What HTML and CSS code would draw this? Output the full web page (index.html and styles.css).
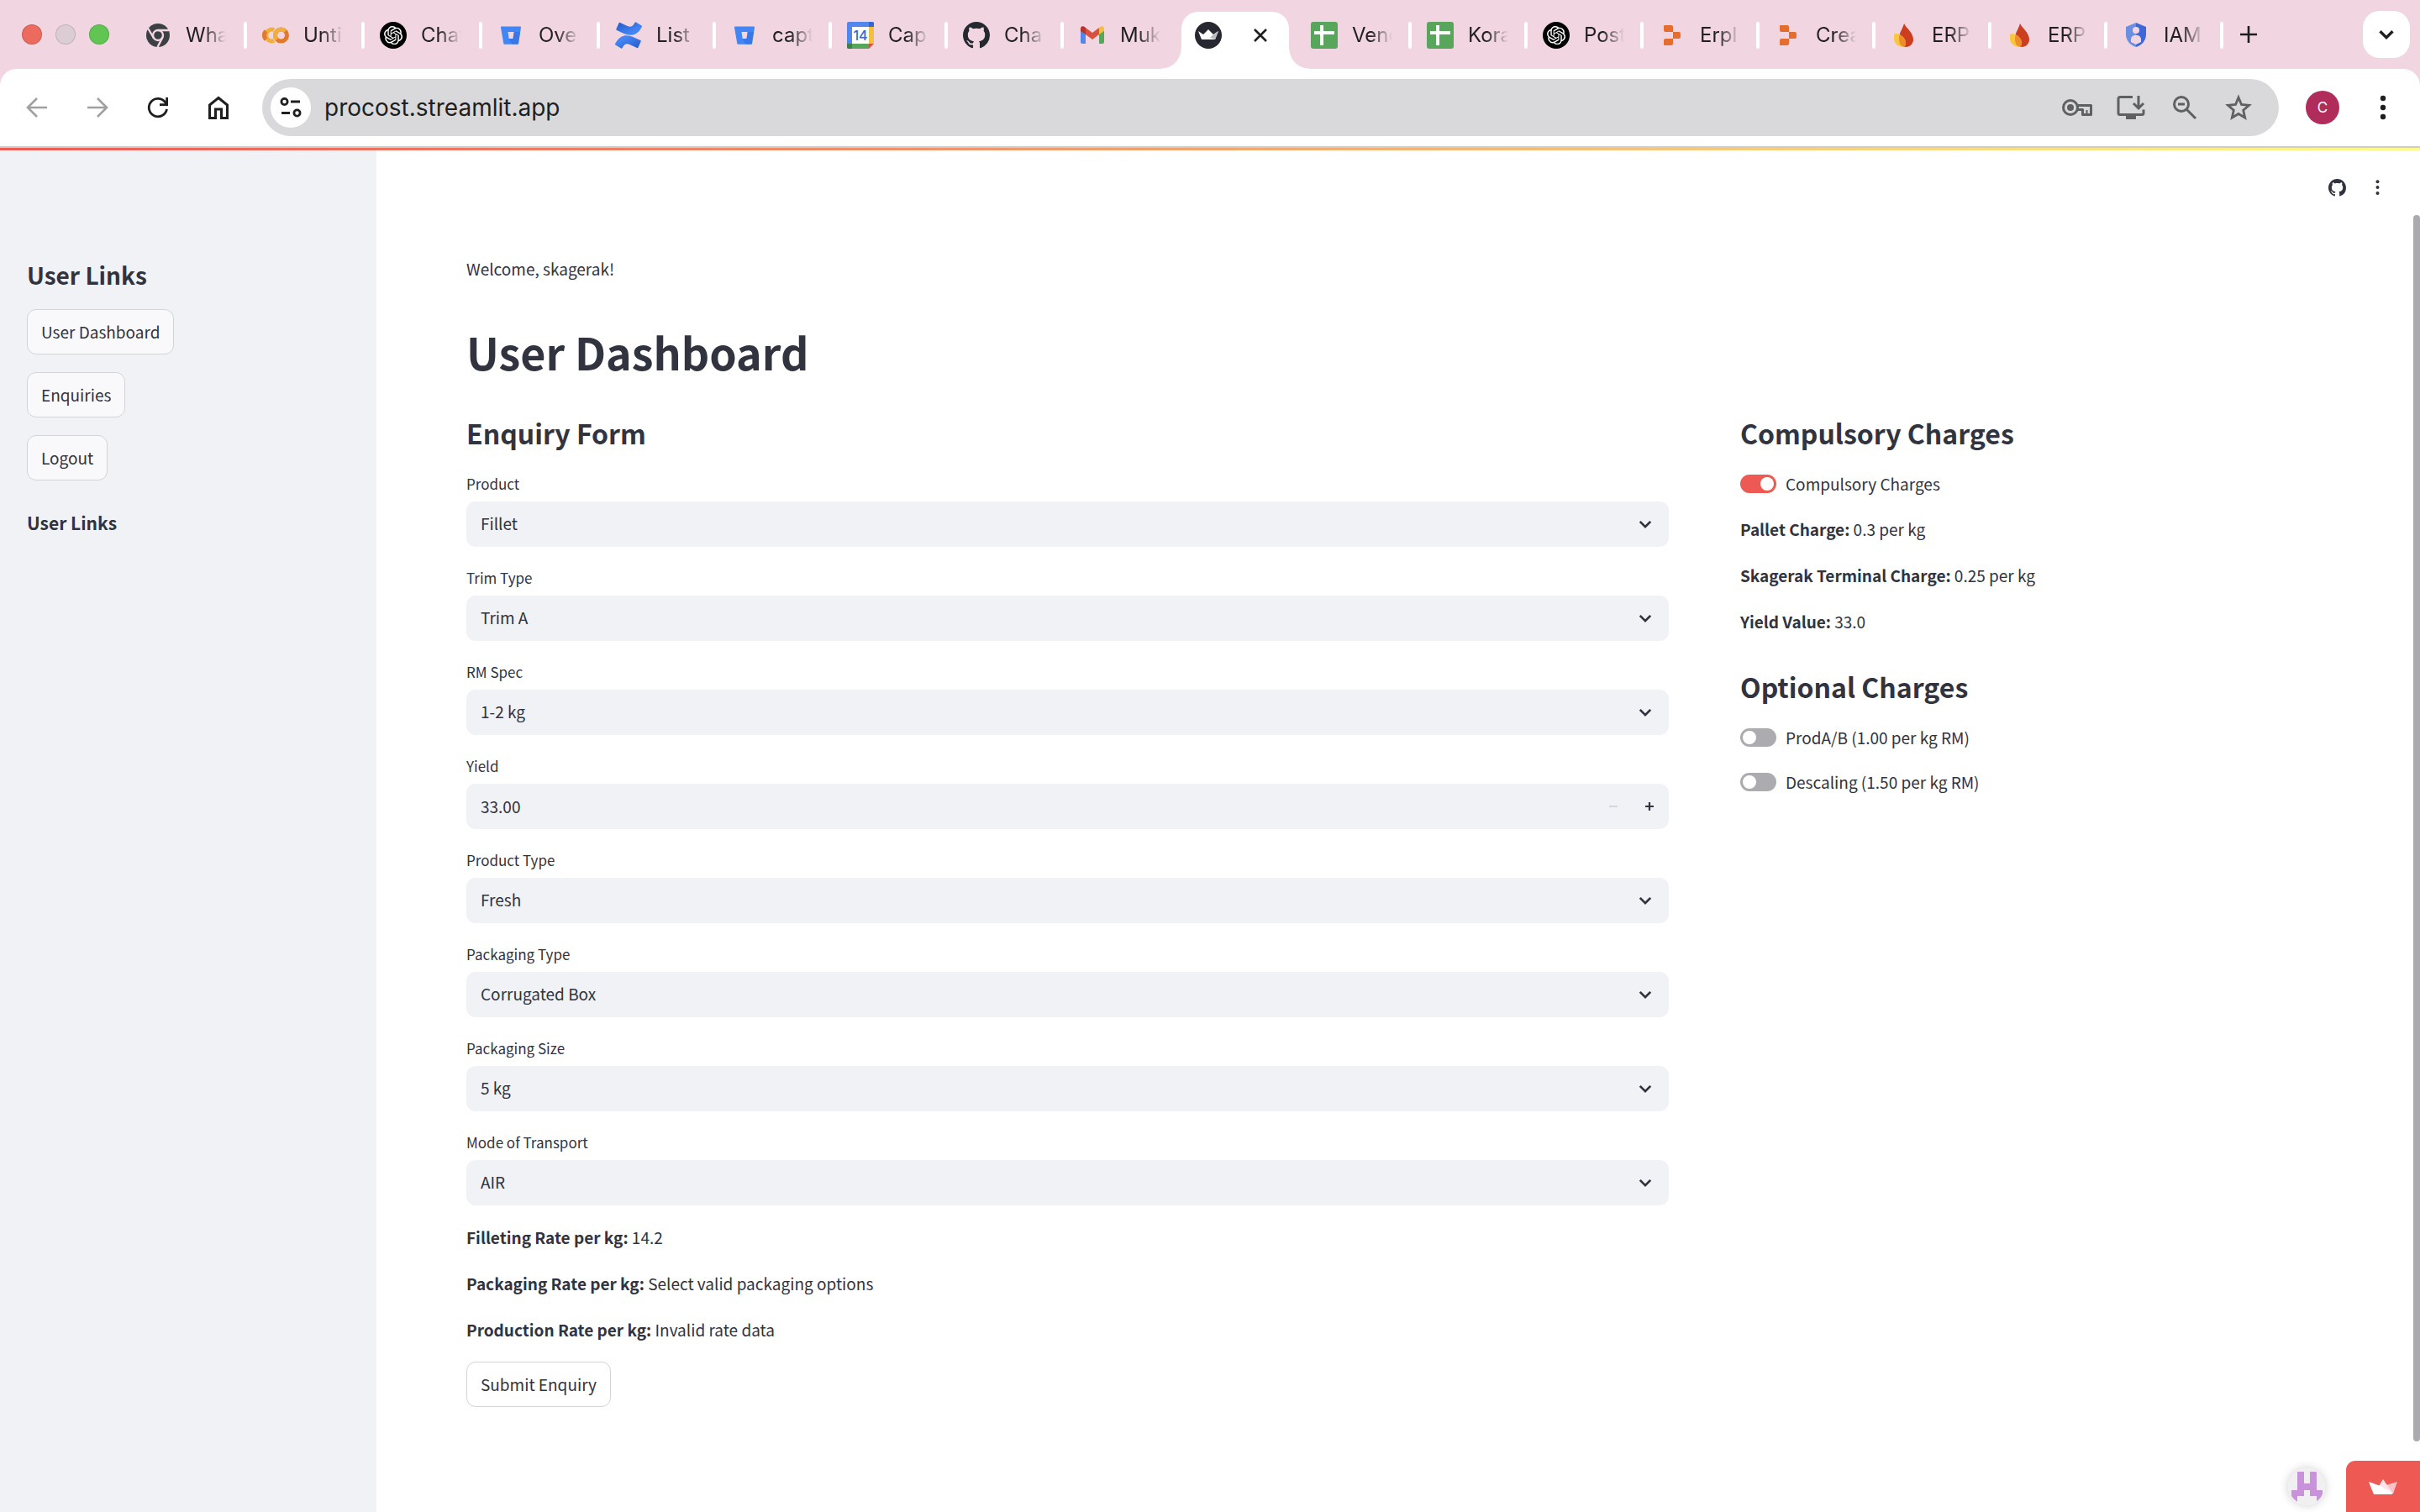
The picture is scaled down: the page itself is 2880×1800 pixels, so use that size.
FILE: index.html
```html
<!DOCTYPE html>
<html lang="en">
<head>
<meta charset="utf-8">
<title>procost</title>
<link rel="stylesheet" href="styles.css">
</head>
<body>
<svg class="defs" aria-hidden="true">
  <symbol id="chatgpt" viewBox="0 0 32 32">
    <circle cx="16" cy="16" r="16" fill="#000"/>
    <path transform="translate(5 5) scale(.92)" fill="#fff" d="M22.28 9.82a5.98 5.98 0 0 0-.51-4.91 6.05 6.05 0 0 0-6.51-2.9A6.07 6.07 0 0 0 4.98 4.18a5.98 5.98 0 0 0-4 2.9 6.05 6.05 0 0 0 .74 7.1 5.98 5.98 0 0 0 .51 4.91 6.05 6.05 0 0 0 6.51 2.9A5.98 5.98 0 0 0 13.26 24a6.06 6.06 0 0 0 5.77-4.21 5.99 5.99 0 0 0 4-2.9 6.06 6.06 0 0 0-.75-7.07zm-9.02 12.61a4.48 4.48 0 0 1-2.88-1.04l.14-.08 4.78-2.76a.8.8 0 0 0 .39-.68v-6.74l2.02 1.17a.07.07 0 0 1 .04.05v5.58a4.5 4.5 0 0 1-4.49 4.5zM3.6 18.3a4.47 4.47 0 0 1-.53-3.01l.14.08 4.78 2.76a.77.77 0 0 0 .78 0l5.84-3.37v2.33a.08.08 0 0 1-.03.06L9.74 19.95A4.5 4.5 0 0 1 3.6 18.3zM2.34 7.9a4.49 4.49 0 0 1 2.37-1.97v5.68a.77.77 0 0 0 .39.68l5.81 3.35-2.02 1.17a.08.08 0 0 1-.07 0l-4.83-2.79A4.5 4.5 0 0 1 2.34 7.87zm16.6 3.86L13.1 8.36l2.02-1.16a.08.08 0 0 1 .07 0l4.83 2.79a4.49 4.49 0 0 1-.68 8.1v-5.68a.79.79 0 0 0-.4-.65zm2.01-3.02-.14-.09-4.77-2.78a.78.78 0 0 0-.79 0L9.41 9.23V6.9a.07.07 0 0 1 .03-.06l4.83-2.79a4.5 4.5 0 0 1 6.68 4.66zM8.31 12.86l-2.02-1.16a.08.08 0 0 1-.04-.06V6.07a4.5 4.5 0 0 1 7.38-3.45l-.14.08-4.78 2.76a.8.8 0 0 0-.39.68zm1.1-2.36 2.6-1.5 2.61 1.5v3l-2.6 1.5-2.61-1.5z"/>
  </symbol>
  <symbol id="bitbucket" viewBox="0 0 32 32">
    <path fill="#4285f5" d="M5 5.500H27a1 1 0 0 1 1 1.200L25 25.800a1.200 1.200 0 0 1-1.200 1H8.500a1.200 1.200 0 0 1-1.200-1L4 6.700a1 1 0 0 1 1-1.200zM12.500 12l1.200 8h4.800l1.200-8z" fill-rule="evenodd"/>
    <path fill="#2b66d8" d="M19.700 12h7.300l-2 14-.8.800h-7l-3.500-6.800h4.800z" opacity=".45"/>
  </symbol>
  <symbol id="github" viewBox="0 0 16 16">
    <path d="M8 0C3.580 0 0 3.580 0 8c0 3.540 2.290 6.530 5.470 7.590.4.070.55-.17.55-.38 0-.19-.01-.82-.01-1.490-2.010.37-2.530-.49-2.690-.94-.09-.23-.48-.94-.82-1.130-.28-.15-.68-.52-.01-.53.63-.01 1.080.58 1.230.82.72 1.210 1.870.87 2.330.66.07-.52.28-.87.51-1.070-1.780-.2-3.640-.89-3.640-3.950 0-.87.31-1.590.82-2.150-.08-.2-.36-1.020.08-2.120 0 0 .67-.21 2.200.82.64-.18 1.320-.27 2-.27s1.360.09 2 .27c1.530-1.040 2.200-.82 2.200-.82.44 1.100.16 1.920.08 2.120.51.56.82 1.270.82 2.150 0 3.070-1.870 3.750-3.650 3.950.29.25.54.73.54 1.480 0 1.070-.01 1.930-.01 2.200 0 .21.15.46.55.38A8.010 8.010 0 0 0 16 8c0-4.420-3.580-8-8-8z"/>
  </symbol>
  <symbol id="sheets" viewBox="0 0 32 32">
    <rect width="32" height="32" rx="3" fill="#58a55c"/>
    <path fill="#fff" d="M11 4h4v7h13v4H15v13h-4V15H4v-4h7z"/>
  </symbol>
  <symbol id="puzzle" viewBox="0 0 32 32">
    <path fill="#e56e2e" d="M7 4h8a2 2 0 0 1 2 2v6H8a2 2 0 0 1-2-2V5a1 1 0 0 1 1-1zM17 12h7a2 2 0 0 1 2 2v4a2 2 0 0 1-2 2h-7zM8 20h9v6a2 2 0 0 1-2 2H7a1 1 0 0 1-1-1v-5a2 2 0 0 1 2-2z"/>
  </symbol>
  <symbol id="flame" viewBox="0 0 32 32">
    <path fill="#cb3f20" d="M16 2c3 6 11 11 11 19 0 5-4 9-9 9-4 0-8-5-8-10 0-7 4-11 6-18z"/>
    <path fill="#f8c73e" d="M5 14c7-1 12 5 11 16C9 30 4 26 4 20c0-3 0-5 1-6z"/>
    <path fill="#ee8d2b" d="M11 15c6 3 9 9 6 14.800C12 30 10 26 10 20c0-2 0-3 1-5z"/>
  </symbol>
  <symbol id="chevron" viewBox="0 0 16 16"><path d="M3 5.500l5 5 5-5" fill="none" stroke="currentColor" stroke-width="2.200"/></symbol>
  <symbol id="dots" viewBox="0 0 8 32"><circle cx="4" cy="5" r="3.200"/><circle cx="4" cy="16" r="3.200"/><circle cx="4" cy="27" r="3.200"/></symbol>
</svg>

<header class="browser">
  <div class="tabstrip">
    <div class="lights"><i class="light red"></i><i class="light idle"></i><i class="light green"></i></div>
    <nav class="tabs" aria-label="Tabs">
      <a class="tab" href="#"><svg class="favicon" viewBox="0 0 32 32"><circle cx="16" cy="16" r="14" fill="#3c4043"/><circle cx="16" cy="16" r="6" fill="none" stroke="#f1d6e2" stroke-width="2.400"/><path d="M16 10h13M10.800 19L4 7.500M21.200 19L15.500 30" stroke="#f1d6e2" stroke-width="2.400"/></svg><span class="tab-title">Wha</span></a>
      <a class="tab" href="#"><svg class="favicon" viewBox="0 0 32 32"><g fill="none" stroke-width="5"><path d="M14.200 9.500A7 7 0 1 0 14.200 22.500" stroke="#f2ae3a"/><path d="M4.500 11A7 7 0 0 0 4.500 21" stroke="#df7a2e"/><circle cx="22.500" cy="16" r="7" stroke="#df7a2e"/><path d="M17.500 21A7 7 0 0 1 27.500 11" stroke="#f2ae3a"/></g></svg><span class="tab-title">Unti</span></a>
      <a class="tab" href="#"><svg class="favicon"><use href="#chatgpt"/></svg><span class="tab-title">Chat</span></a>
      <a class="tab" href="#"><svg class="favicon"><use href="#bitbucket"/></svg><span class="tab-title">Over</span></a>
      <a class="tab" href="#"><svg class="favicon" viewBox="0 0 24 24"><defs><linearGradient id="fold-up" x1="1" y1="1" x2="0.3" y2="0.3"><stop offset="0" stop-color="#2457c5"/><stop offset="1" stop-color="#4385f5"/></linearGradient><linearGradient id="fold-down" x1="0" y1="0" x2="0.7" y2="0.7"><stop offset="0" stop-color="#2457c5"/><stop offset="1" stop-color="#4385f5"/></linearGradient></defs><path fill="url(#fold-up)" d="M.87 18.257c-.248.382-.53.875-.763 1.245a.764.764 0 0 0 .255 1.040l4.965 3.054a.764.764 0 0 0 1.058-.26c.199-.332.454-.763.733-1.221 1.967-3.247 3.945-2.853 7.508-1.146l4.957 2.337a.764.764 0 0 0 1.028-.382l2.364-5.346a.764.764 0 0 0-.382-1 599.851 599.851 0 0 1-4.965-2.361C10.911 10.970 5.224 11.185.87 18.257z"/><path fill="url(#fold-down)" d="M23.131 5.743c.249-.405.531-.875.764-1.250a.764.764 0 0 0-.256-1.034L18.675.404a.764.764 0 0 0-1.058.26c-.195.335-.451.763-.734 1.225-1.966 3.246-3.945 2.850-7.508 1.146L4.437.694a.764.764 0 0 0-1.027.382L1.046 6.422a.764.764 0 0 0 .382 1c1.039.49 3.105 1.467 4.965 2.361 6.698 3.246 12.392 3.029 16.738-4.040z"/></svg><span class="tab-title">List</span></a>
      <a class="tab" href="#"><svg class="favicon"><use href="#bitbucket"/></svg><span class="tab-title">capt</span></a>
      <a class="tab" href="#"><svg class="favicon" viewBox="0 0 32 32"><rect width="32" height="32" rx="2" fill="#5186ec"/><path fill="#3367d6" d="M26 0h4a2 2 0 0 1 2 2v4h-6z"/><path fill="#f2bf42" d="M26 6h6v20h-6z"/><path fill="#58a55c" d="M6 26h20v6H6z"/><path fill="#3f7f45" d="M0 26h6v6H2a2 2 0 0 1-2-2z"/><path fill="#f1d6e2" d="M26 26h6v6h-6z"/><path fill="#d85140" d="M26 26h6l-6 6z"/><path fill="#fff" d="M6 6h20v20H6z"/><text x="16" y="22" text-anchor="middle" class="cal-day">14</text></svg><span class="tab-title">Cap</span></a>
      <a class="tab" href="#"><svg class="favicon ink"><use href="#github"/></svg><span class="tab-title">Cha</span></a>
      <a class="tab" href="#"><svg class="favicon" viewBox="0 0 32 32"><path fill="#5186ec" d="M2 9l6 4v13H4a2 2 0 0 1-2-2z"/><path fill="#58a55c" d="M30 9l-6 4v13h4a2 2 0 0 0 2-2z"/><path fill="#d85140" d="M8 7l8 6 8-6v8l-8 6-8-6z"/><path fill="#b3352b" d="M2 8c0-3 3-4 6-1v8l-6-4z"/><path fill="#f2bf42" d="M30 8c0-3-3-4-6-1v8l6-4z"/></svg><span class="tab-title">Muk</span></a>
      <a class="tab active" href="#" aria-label="procost"><svg class="favicon" viewBox="0 0 32 32"><circle cx="16" cy="16" r="16" fill="#262730"/><path fill="#fff" d="M4 11l6 4 6-6 6 6 6-4-4 10H8z"/><path fill="#bbb" d="M22 15l6-4-4 10-6-2z"/></svg><svg class="close" viewBox="0 0 16 16"><path d="M1 1l14 14M15 1L1 15" stroke="#1f1f1f" stroke-width="2.600"/></svg></a>
      <a class="tab" href="#"><svg class="favicon"><use href="#sheets"/></svg><span class="tab-title">Vend</span></a>
      <a class="tab" href="#"><svg class="favicon"><use href="#sheets"/></svg><span class="tab-title">Kora</span></a>
      <a class="tab" href="#"><svg class="favicon"><use href="#chatgpt"/></svg><span class="tab-title">Post</span></a>
      <a class="tab" href="#"><svg class="favicon"><use href="#puzzle"/></svg><span class="tab-title">Erpl</span></a>
      <a class="tab" href="#"><svg class="favicon"><use href="#puzzle"/></svg><span class="tab-title">Crea</span></a>
      <a class="tab" href="#"><svg class="favicon"><use href="#flame"/></svg><span class="tab-title">ERP</span></a>
      <a class="tab" href="#"><svg class="favicon"><use href="#flame"/></svg><span class="tab-title">ERP</span></a>
      <a class="tab" href="#"><svg class="favicon" viewBox="0 0 32 32"><path fill="#6a8fe3" d="M16 1L4 6v9c0 7 5 13 12 15z"/><path fill="#3f67d6" d="M16 1l12 5v9c0 7-5 13-12 15z"/><circle cx="16" cy="10" r="4" fill="#f1d6e2"/><path fill="#f1d6e2" d="M10 24v-3c0-7 12-7 12 0v3l-6 3z"/></svg><span class="tab-title">IAM</span></a>
    </nav>
    <button class="icon-btn new-tab" aria-label="New tab"><svg width="20" height="20" viewBox="0 0 20 20"><path d="M10 0v20M0 10h20" stroke="currentColor" stroke-width="2.600"/></svg></button>
    <button class="icon-btn tab-search" aria-label="Search tabs"><svg width="24" height="24"><use href="#chevron"/></svg></button>
  </div>
  <div class="toolbar">
    <button class="icon-btn nav dim" aria-label="Back"><svg width="32" height="32" viewBox="0 0 32 32"><path d="M28 16H5M16 5L5 16l11 11" fill="none" stroke="currentColor" stroke-width="2.600"/></svg></button>
    <button class="icon-btn nav dim" aria-label="Forward"><svg width="32" height="32" viewBox="0 0 32 32"><path d="M4 16h23M16 5l11 11-11 11" fill="none" stroke="currentColor" stroke-width="2.600"/></svg></button>
    <button class="icon-btn nav" aria-label="Reload"><svg width="32" height="32" viewBox="0 0 32 32"><path d="M26.500 18A10.700 10.700 0 1 1 24 9l2.500 3" fill="none" stroke="currentColor" stroke-width="2.800"/><path d="M28 4v10H18v-2.800h7.200V4z" fill="currentColor"/></svg></button>
    <button class="icon-btn nav" aria-label="Home"><svg width="32" height="32" viewBox="0 0 32 32"><path d="M5.500 13L16 4.500 26.500 13v15.500h-7V18h-7v10.500h-7z" fill="none" stroke="currentColor" stroke-width="3"/></svg></button>
    <div class="omnibox">
      <button class="icon-btn site-info" aria-label="Site information"><svg width="28" height="28" viewBox="0 0 28 28"><g fill="none" stroke="currentColor" stroke-width="2.800"><circle cx="6.500" cy="7" r="3.600"/><path d="M14 7h11M3 20.500h10"/><circle cx="21.500" cy="20.500" r="3.600"/></g></svg></button>
      <input class="url" type="text" value="procost.streamlit.app" aria-label="Address">
      <button class="icon-btn omni" aria-label="Passwords"><svg width="40" height="32" viewBox="0 0 40 32"><circle cx="12" cy="16" r="8.500" fill="none" stroke="currentColor" stroke-width="3"/><circle cx="12" cy="16" r="4" fill="currentColor"/><path d="M20 13.500h16.500v11h-10v-6H20" fill="none" stroke="currentColor" stroke-width="3" stroke-linejoin="round"/><path d="M31.500 19v5" stroke="currentColor" stroke-width="2"/></svg></button>
      <button class="icon-btn omni" aria-label="Install"><svg width="36" height="32" viewBox="0 0 36 32"><path d="M20 3.500H5a2 2 0 0 0-2 2v17a2 2 0 0 0 2 2h26a2 2 0 0 0 2-2v-4M27 2v14M21 11l6 6 6-6" fill="none" stroke="currentColor" stroke-width="3"/><path d="M12 25h12v5H12z" fill="currentColor"/></svg></button>
      <button class="icon-btn omni" aria-label="Zoom"><svg width="32" height="32" viewBox="0 0 32 32"><circle cx="12" cy="12" r="8.500" fill="none" stroke="currentColor" stroke-width="3"/><path d="M8 12h8M18 18l11 11" stroke="currentColor" stroke-width="3"/></svg></button>
      <button class="icon-btn omni" aria-label="Bookmark"><svg width="32" height="32" viewBox="0 0 32 32"><path d="M16 4l3.500 8.500 9 .8-6.800 6 2 8.900L16 23.500l-7.700 4.700 2-8.900-6.800-6 9-.8z" fill="none" stroke="currentColor" stroke-width="2.800"/></svg></button>
    </div>
    <button class="icon-btn profile">C</button>
    <button class="icon-btn menu" aria-label="Menu"><svg width="8" height="32"><use href="#dots"/></svg></button>
  </div>
</header>

<div class="app">
  <div class="decoration"></div>
  <aside class="sidebar">
    <h2 class="side-title">User Links</h2>
    <button class="btn">User Dashboard</button>
    <button class="btn">Enquiries</button>
    <button class="btn">Logout</button>
    <p class="side-note"><strong>User Links</strong></p>
  </aside>
  <main class="main">
    <div class="app-actions">
      <a href="#" aria-label="GitHub"><svg width="21" height="21"><use href="#github"/></svg></a>
      <button class="icon-btn" aria-label="App menu"><svg width="5" height="20"><use href="#dots"/></svg></button>
    </div>
    <div class="content">
      <p class="text">Welcome, skagerak!</p>
      <h1 class="title">User Dashboard</h1>
      <div class="columns">
        <form class="form">
          <h2 class="heading">Enquiry Form</h2>
          <div class="field"><label for="product">Product</label><div class="control"><select id="product"><option>Fillet</option></select><svg class="chev"><use href="#chevron"/></svg></div></div>
          <div class="field"><label for="trim">Trim Type</label><div class="control"><select id="trim"><option>Trim A</option></select><svg class="chev"><use href="#chevron"/></svg></div></div>
          <div class="field"><label for="spec">RM Spec</label><div class="control"><select id="spec"><option>1-2 kg</option></select><svg class="chev"><use href="#chevron"/></svg></div></div>
          <div class="field"><label for="yield">Yield</label><div class="control number"><input id="yield" type="text" inputmode="decimal" value="33.00"><button type="button" class="icon-btn step" aria-label="Decrease" disabled><svg width="12" height="12" viewBox="0 0 12 12"><path d="M1 6h10" stroke="currentColor" stroke-width="2"/></svg></button><button type="button" class="icon-btn step" aria-label="Increase"><svg width="12" height="12" viewBox="0 0 12 12"><path d="M1 6h10M6 1v10" stroke="currentColor" stroke-width="2.200"/></svg></button></div></div>
          <div class="field"><label for="ptype">Product Type</label><div class="control"><select id="ptype"><option>Fresh</option></select><svg class="chev"><use href="#chevron"/></svg></div></div>
          <div class="field"><label for="pack">Packaging Type</label><div class="control"><select id="pack"><option>Corrugated Box</option></select><svg class="chev"><use href="#chevron"/></svg></div></div>
          <div class="field"><label for="size">Packaging Size</label><div class="control"><select id="size"><option>5 kg</option></select><svg class="chev"><use href="#chevron"/></svg></div></div>
          <div class="field"><label for="mode">Mode of Transport</label><div class="control"><select id="mode"><option>AIR</option></select><svg class="chev"><use href="#chevron"/></svg></div></div>
          <div class="facts">
            <p class="text"><strong>Filleting Rate per kg:</strong> 14.2</p>
            <p class="text"><strong>Packaging Rate per kg:</strong> Select valid packaging options</p>
            <p class="text"><strong>Production Rate per kg:</strong> Invalid rate data</p>
          </div>
          <button type="button" class="btn submit">Submit Enquiry</button>
        </form>
        <section class="charges">
          <h2 class="heading">Compulsory Charges</h2>
          <label class="toggle"><input type="checkbox" checked>Compulsory Charges</label>
          <div class="facts">
            <p class="text"><strong>Pallet Charge:</strong> 0.3 per kg</p>
            <p class="text"><strong>Skagerak Terminal Charge:</strong> 0.25 per kg</p>
            <p class="text"><strong>Yield Value:</strong> 33.0</p>
          </div>
          <h2 class="heading optional">Optional Charges</h2>
          <label class="toggle"><input type="checkbox">ProdA/B (1.00 per kg RM)</label>
          <label class="toggle"><input type="checkbox">Descaling (1.50 per kg RM)</label>
        </section>
      </div>
    </div>
  </main>
  <div class="scroll-thumb"></div>
  <div class="badges">
    <a class="owner" href="#" aria-label="App owner"><svg width="44" height="44" viewBox="0 0 44 44"><defs><clipPath id="round"><circle cx="22" cy="22" r="21"/></clipPath></defs><circle cx="22" cy="22" r="22" fill="#f0f0f0"/><path clip-path="url(#round)" fill="#c993d9" d="M11 4h8v14h7V4h8v22h7v14h-7v-7h-8v-7h-7v7h-8v7H4V26h7z"/></svg></a>
    <a class="host" href="#" aria-label="Hosted with Streamlit"><svg width="36" height="20" viewBox="0 0 36 20"><path fill="#f9c3c9" d="M35 4l-5 14-12-9z"/><path fill="#fde4e8" d="M18 1l12 17-20-4z"/><path fill="#fff" d="M1 4l14 5 15 8.500L28 19H8a2 2 0 0 1-1.500-1z"/></svg></a>
  </div>
</div>
</body>
</html>
```
FILE: styles.css
```css
* { box-sizing: border-box; }
body {
  margin: 0;
  min-height: 100vh;
  display: flex;
  flex-direction: column;
  background: #fff;
  color: #31333f;
  font: 19px/34px "Noto Sans CJK SC", "Noto Sans", sans-serif;
}
h1, h2, p { margin: 0; }
button, input, select { font: inherit; color: inherit; }
a { color: inherit; text-decoration: none; }
svg { flex: none; fill: currentColor; }
.defs { position: absolute; width: 0; height: 0; }
.icon-btn {
  display: flex;
  align-items: center;
  justify-content: center;
  padding: 0;
  border: 0;
  background: none;
}

/* Browser chrome */
.browser { font-family: Inter, sans-serif; color: #1f1f1f; background: #f1d6e2; }
.tabstrip { display: flex; align-items: center; height: 82px; padding: 0 12px 0 26px; }
.lights { display: flex; gap: 16px; width: 126px; }
.light { width: 24px; height: 24px; border-radius: 50%; border: 1px solid #0002; }
.red { background: #ec6a5e; }
.idle { background: #dccdd5; }
.green { background: #61c554; }
.tabs {
  flex: 1;
  align-self: stretch;
  display: grid;
  grid-template-columns: repeat(4, minmax(0, 140fr)) repeat(14, minmax(0, 138fr));
}
.tab {
  position: relative;
  display: flex;
  align-items: center;
  gap: 17px;
  padding: 2px 16px 0 20px;
  font-size: 24px;
  line-height: 32px;
}
.tab::after {
  content: "";
  position: absolute;
  right: -2px;
  top: 26px;
  width: 4px;
  height: 32px;
  border-radius: 2px;
  background: #fff;
}
.favicon { width: 32px; height: 32px; }
.ink { color: #24292f; }
.cal-day { font: 500 16px Inter, sans-serif; fill: #3367d6; }
.tab-title {
  flex: 0 0 48px;
  overflow: hidden;
  white-space: nowrap;
  mask-image: linear-gradient(90deg, #000 45%, transparent);
}
.active {
  margin: 14px 6px 0 4px;
  padding: 0 26px 12px 16px;
  justify-content: space-between;
  border-radius: 20px 20px 0 0;
  background: #fff;
}
.active::before, .active::after {
  content: "";
  position: absolute;
  top: auto;
  bottom: 0;
  width: 24px;
  height: 24px;
  border-radius: 0;
}
.active::before { left: -24px; background: radial-gradient(circle at 0 0, transparent 23px, #fff 24px); }
.active::after { right: -24px; background: radial-gradient(circle at 100% 0, transparent 23px, #fff 24px); }
.tab:has(+ .active)::after { display: none; }
.close { width: 16px; height: 16px; }
.new-tab { width: 64px; height: 64px; }
.tab-search { width: 56px; height: 56px; margin-left: 104px; border-radius: 20px; background: #fff; }
.toolbar {
  display: flex;
  align-items: center;
  height: 94px;
  padding: 0 12px 0 8px;
  border-bottom: 2px solid #cccdcd;
  border-radius: 20px 20px 0 0;
  background: #fff;
}
.nav { width: 72px; height: 72px; }
.dim { color: #a0a0a0; }
.omnibox {
  flex: 1;
  display: flex;
  align-items: center;
  height: 68px;
  margin-left: 16px;
  padding: 0 16px 0 10px;
  border-radius: 34px;
  background: #d9d9db;
}
.site-info { width: 48px; height: 48px; border-radius: 50%; background: #fff; }
.url { flex: 1; min-width: 0; padding: 0 0 0 16px; border: 0; background: none; font-size: 28px; line-height: 36px; }
.omni { width: 64px; height: 64px; color: #5f6062; }
.profile {
  width: 40px;
  height: 40px;
  margin-left: 32px;
  border-radius: 50%;
  background: #b02d5b;
  color: #fff;
  font-size: 17px;
}
.menu { width: 64px; height: 64px; margin-left: 20px; }

/* Application */
.app { position: relative; flex: 1; display: flex; }
.decoration {
  position: absolute;
  top: 0;
  left: 0;
  right: 0;
  height: 3px;
  background: linear-gradient(90deg, #ee5a54, #f2a56e, #fdfb8c);
}
.sidebar {
  flex: none;
  display: flex;
  flex-direction: column;
  align-items: flex-start;
  gap: 21px;
  width: 448px;
  padding: 131px 32px 32px;
  background: #f0f2f6;
}
.side-title { font-size: 28px; line-height: 40px; font-weight: 600; }
.side-note { padding-top: 12px; font-size: 21px; }
.btn {
  height: 54px;
  padding: 0 16px;
  border: 1px solid #d3d4d7;
  border-radius: 11px;
  background: #f9f9fb;
  line-height: 34px;
}
.submit { background: #fff; }
.main { flex: 1; min-width: 0; }
.app-actions {
  display: flex;
  align-items: center;
  justify-content: flex-end;
  gap: 35px;
  height: 94px;
  padding: 0 48px 0 0;
}
.app-actions a { display: flex; }
.content { padding: 33px 107px 80px; }
.title { margin-top: 47px; font-size: 52px; line-height: 70px; font-weight: 700; }
.columns { display: grid; grid-template-columns: 1431fr 702fr; gap: 85px; margin-top: 37px; }
.heading { font-size: 32px; line-height: 48px; font-weight: 600; }
.optional { margin-top: 15px; }
.form { display: flex; flex-direction: column; align-items: flex-start; }
.field { align-self: stretch; display: flex; flex-direction: column; gap: 5px; margin-top: 21px; }
.field label { font-size: 17px; line-height: 32px; }
.control { display: flex; align-items: center; height: 54px; border-radius: 11px; background: #f0f2f6; overflow: hidden; }
.number { padding-right: 2px; }
.control select, .control input {
  flex: 1;
  min-width: 0;
  height: 54px;
  padding: 0 17px 2px;
  border: 0;
  background: none;
  appearance: none;
}
.chev { width: 20px; height: 20px; margin-right: 18px; }
.step { width: 43px; height: 54px; }
.step:disabled { color: #d3d7e2; }
.facts { display: flex; flex-direction: column; gap: 21px; padding: 21px 0; }
.charges { display: flex; flex-direction: column; align-items: flex-start; }
.toggle { display: flex; align-items: center; gap: 11px; margin-top: 21px; line-height: 32px; }
.toggle input {
  display: flex;
  align-items: center;
  width: 43px;
  height: 22px;
  margin: 0;
  padding: 0 3px;
  border-radius: 11px;
  background: #acabb0;
  appearance: none;
}
.toggle input::before { content: ""; width: 16px; height: 16px; border-radius: 50%; background: #fff; }
.toggle input:checked { justify-content: flex-end; background: #ee5a53; }
.scroll-thumb { position: absolute; top: 80px; right: 0; bottom: 84px; width: 8px; border-radius: 4px; background: #abaaaf; }
.badges { position: absolute; right: 0; bottom: 0; display: flex; align-items: center; gap: 25px; }
.owner { display: flex; border-radius: 50%; box-shadow: 0 0 12px #0003; }
.host { display: flex; align-items: center; justify-content: center; width: 88px; height: 61px; border-radius: 11px 0 0 0; background: #ee5a53; }
```
